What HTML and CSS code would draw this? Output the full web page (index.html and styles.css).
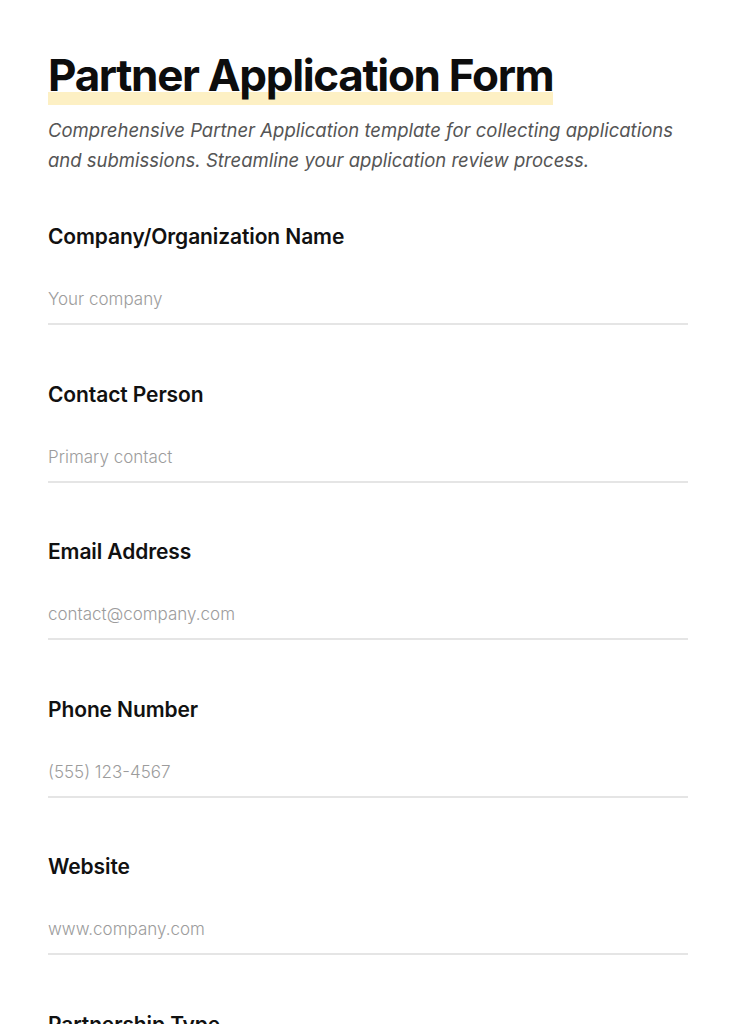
FILE: index.html
```html
<!DOCTYPE html>
<html lang="en">
<head>
<meta charset="utf-8">
<title>Partner Application Form</title>
<link rel="stylesheet" href="styles.css">
</head>
<body>
<main class="page">
  <h1 class="title"><span class="title-mark">Partner Application Form</span></h1>
  <p class="desc">Comprehensive Partner Application template for collecting applications and submissions. Streamline your application review process.</p>
  <form class="form">
    <div class="field">
      <label class="label" for="company">Company/Organization Name</label>
      <input class="input" id="company" type="text" placeholder="Your company">
    </div>
    <div class="field">
      <label class="label" for="contact">Contact Person</label>
      <input class="input" id="contact" type="text" placeholder="Primary contact">
    </div>
    <div class="field">
      <label class="label" for="email">Email Address</label>
      <input class="input" id="email" type="email" placeholder="contact@company.com">
    </div>
    <div class="field">
      <label class="label" for="phone">Phone Number</label>
      <input class="input" id="phone" type="tel" placeholder="(555) 123-4567">
    </div>
    <div class="field">
      <label class="label" for="website">Website</label>
      <input class="input" id="website" type="text" placeholder="www.company.com">
    </div>
    <div class="field">
      <label class="label" for="ptype">Partnership Type</label>
      <input class="input" id="ptype" type="text" placeholder="Select a type">
    </div>
  </form>
</main>
</body>
</html>
```
FILE: styles.css
```css
* { box-sizing: border-box; }
html, body { margin: 0; padding: 0; background: #ffffff; }
body {
  font-family: Inter, "Noto Sans", "Liberation Sans", sans-serif;
  color: #111111;
}
.page {
  padding: 49px 48px 48px;
  width: 736px;
}
.title {
  margin: 0;
  font-size: 44px;
  line-height: 53px;
  font-weight: 700;
  letter-spacing: -0.03em;
  color: #0d0d0d;
}
.title-mark {
  background: linear-gradient(to bottom, transparent 78%, #fdf0c4 78%);
  padding-bottom: 3px;
}
.desc {
  margin: 13px 0 0;
  font-size: 18.5px;
  line-height: 30px;
  font-style: italic;
  font-weight: 400;
  color: #555555;
  letter-spacing: 0;
}
.form {
  margin-top: 48px;
  display: flex;
  flex-direction: column;
  gap: 55.5px;
}
.field {
  display: flex;
  flex-direction: column;
  gap: 23px;
}
.label {
  font-size: 21px;
  line-height: 28px;
  font-weight: 600;
  letter-spacing: -0.005em;
  color: #111111;
}
.input {
  width: 100%;
  border: 0;
  border-bottom: 2px solid #e5e5e5;
  padding: 13px 0 12px;
  font-family: inherit;
  font-size: 17px;
  line-height: 24px;
  color: #111111;
  background: transparent;
  outline: none;
}
.input::placeholder {
  color: #9c9c9c;
  font-weight: 300;
  opacity: 1;
}
```
